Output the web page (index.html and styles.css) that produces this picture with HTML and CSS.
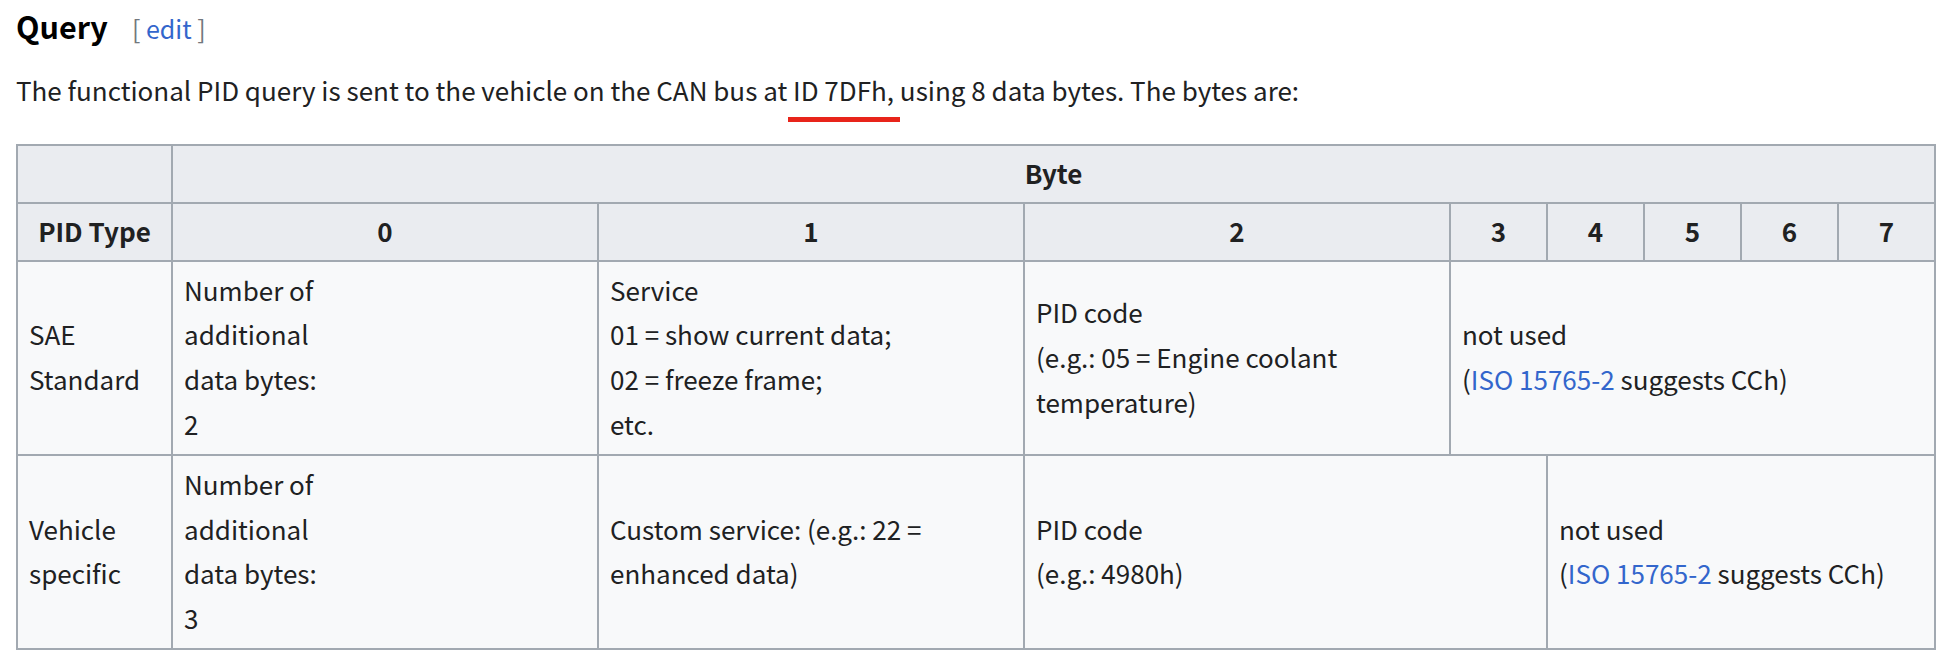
FILE: index.html
```html
<!DOCTYPE html>
<html lang="en">
<head>
<meta charset="utf-8">
<title>Query</title>
<link rel="stylesheet" href="styles.css">
</head>
<body>
<div class="page">
  <h3 class="heading"><span class="title">Query</span><span class="edit"><span class="bracket">[</span> <a href="#">edit</a> <span class="bracket">]</span></span></h3>
  <p class="lead">The functional PID query is sent to the vehicle on the CAN bus at <span class="mark">ID 7DFh,</span> using 8 data bytes. The bytes are:</p>
  <table class="pid">
    <colgroup>
      <col class="c-type">
      <col class="c-wide">
      <col class="c-wide">
      <col class="c-wide">
      <col class="c-narrow">
      <col class="c-narrow">
      <col class="c-narrow">
      <col class="c-narrow">
      <col class="c-narrow">
    </colgroup>
    <tr>
      <th></th>
      <th colspan="8">Byte</th>
    </tr>
    <tr>
      <th>PID Type</th>
      <th>0</th>
      <th>1</th>
      <th>2</th>
      <th>3</th>
      <th>4</th>
      <th>5</th>
      <th>6</th>
      <th>7</th>
    </tr>
    <tr>
      <td>SAE<br>Standard</td>
      <td>Number of<br>additional<br>data bytes:<br>2</td>
      <td>Service<br>01 = show current data;<br>02 = freeze frame;<br>etc.</td>
      <td>PID code<br>(e.g.: 05 = Engine coolant<br>temperature)</td>
      <td colspan="5">not used<br>(<a href="#">ISO 15765-2</a> suggests CCh)</td>
    </tr>
    <tr>
      <td>Vehicle<br>specific</td>
      <td>Number of<br>additional<br>data bytes:<br>3</td>
      <td>Custom service: (e.g.: 22 =<br>enhanced data)</td>
      <td colspan="2">PID code<br>(e.g.: 4980h)</td>
      <td colspan="4">not used<br>(<a href="#">ISO 15765-2</a> suggests CCh)</td>
    </tr>
  </table>
</div>
</body>
</html>
```
FILE: styles.css
```css
html, body {
  margin: 0;
  padding: 0;
  background: #ffffff;
}

body {
  font-family: "Noto Sans CJK KR", "Noto Sans", sans-serif;
  color: #202122;
  font-size: 26px;
  line-height: 1.7;
}

.page {
  padding: 0 11px 0 16px;
}

a {
  color: #3366cc;
  text-decoration: none;
}

.heading {
  margin: 0;
  padding-top: 0;
  font-size: 30.5px;
  line-height: 52px;
  font-weight: 700;
  color: #000000;
  display: flex;
  align-items: baseline;
  gap: 24px;
}

.edit {
  font-size: 25px;
  font-weight: 400;
  color: #72777d;
}

.bracket {
  color: #72777d;
}

.lead {
  margin: 14px 0 0 0;
  line-height: 44px;
}

.mark {
  padding: 0 6px 14px 5px;
  margin: 0 -6px 0 -5px;
  background-image: linear-gradient(#e8241a, #e8241a);
  background-repeat: no-repeat;
  background-size: 100% 5px;
  background-position: left bottom;
}

.pid {
  margin-top: 32px;
  width: 1920px;
  table-layout: fixed;
  border-collapse: collapse;
  background: #f8f9fa;
  border: 2px solid #a2a9b1;
}

.c-type { width: 155px; }
.c-wide { width: 426px; }
.c-narrow { width: 97px; }

.pid th,
.pid td {
  border: 2px solid #a2a9b1;
  padding: 6px 11px 7px;
  line-height: 44.8px;
  vertical-align: middle;
}

.pid th {
  background: #eaecf0;
  font-weight: 700;
  text-align: center;
  padding-top: 5px;
  padding-bottom: 6px;
}

.pid td {
  text-align: left;
}
```
